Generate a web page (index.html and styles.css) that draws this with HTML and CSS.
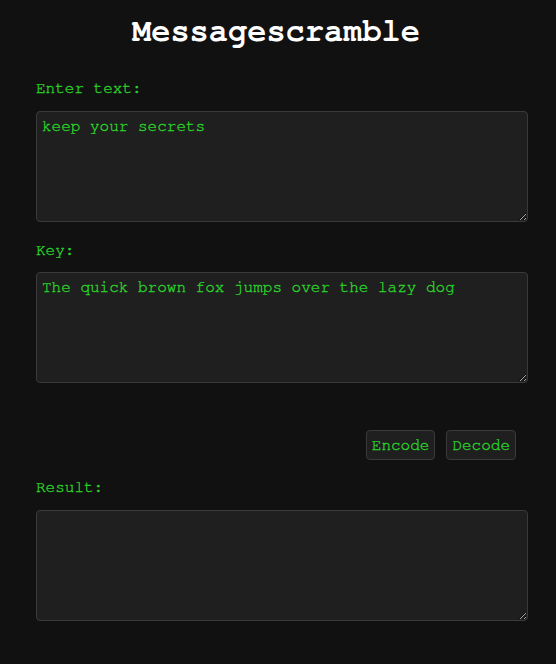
FILE: index.html
```html
<!DOCTYPE html>
<html>
<head>
<meta charset="utf-8">
<link rel="stylesheet" href="styles.css">
</head>
<body>
<main class="app">
  <h1 class="title">Messagescramble</h1>
  <label class="label first" for="text">Enter text:</label>
  <textarea id="text" class="box">keep your secrets</textarea>
  <label class="label" for="key">Key:</label>
  <textarea id="key" class="box">The quick brown fox jumps over the lazy dog</textarea>
  <div class="actions">
    <button class="btn">Encode</button>
    <button class="btn">Decode</button>
  </div>
  <label class="label result" for="result">Result:</label>
  <textarea id="result" class="box"></textarea>
</main>
</body>
</html>
```
FILE: styles.css
```css
html, body {
  margin: 0;
  padding: 0;
  background: #111111;
}
body {
  font-family: "Nimbus Mono PS", "Nimbus Mono L", FreeMono, "Courier New", Courier, "Liberation Mono", monospace;
  color: #2ad42a;
}
.app {
  display: flex;
  flex-direction: column;
  padding: 13px 28px 0 36px;
}
.title {
  margin: 0;
  font-size: 32px;
  line-height: 36px;
  font-weight: bold;
  color: #ffffff;
  text-align: center;
  padding-right: 12px;
}
.label {
  display: block;
  font-size: 16px;
  line-height: 18px;
  margin: 19px 0 13px;
  -webkit-text-stroke: 0.35px #2ad42a;
}
.label.first {
  margin-top: 30px;
  margin-bottom: 14px;
}
.label.result {
  margin-top: 18px;
  margin-bottom: 14px;
}
.box {
  display: block;
  box-sizing: border-box;
  width: 492px;
  height: 111px;
  margin: 0;
  padding: 5px 5px;
  background: #1f1f1f;
  border: 1px solid #3a3a3a;
  border-radius: 4px;
  color: #2ad42a;
  -webkit-text-stroke: 0.35px #2ad42a;
  font-family: inherit;
  font-size: 16px;
  line-height: 18px;
  resize: vertical;
  outline: none;
}
.actions {
  display: flex;
  justify-content: flex-end;
  gap: 11px;
  margin-top: 47px;
  padding-right: 12px;
}
.btn {
  box-sizing: border-box;
  height: 30px;
  padding: 0 5px;
  background: #1f1f1f;
  border: 1px solid #3a3a3a;
  border-radius: 4px;
  color: #2ad42a;
  -webkit-text-stroke: 0.35px #2ad42a;
  font-family: inherit;
  font-size: 16px;
  line-height: 18px;
}
```
